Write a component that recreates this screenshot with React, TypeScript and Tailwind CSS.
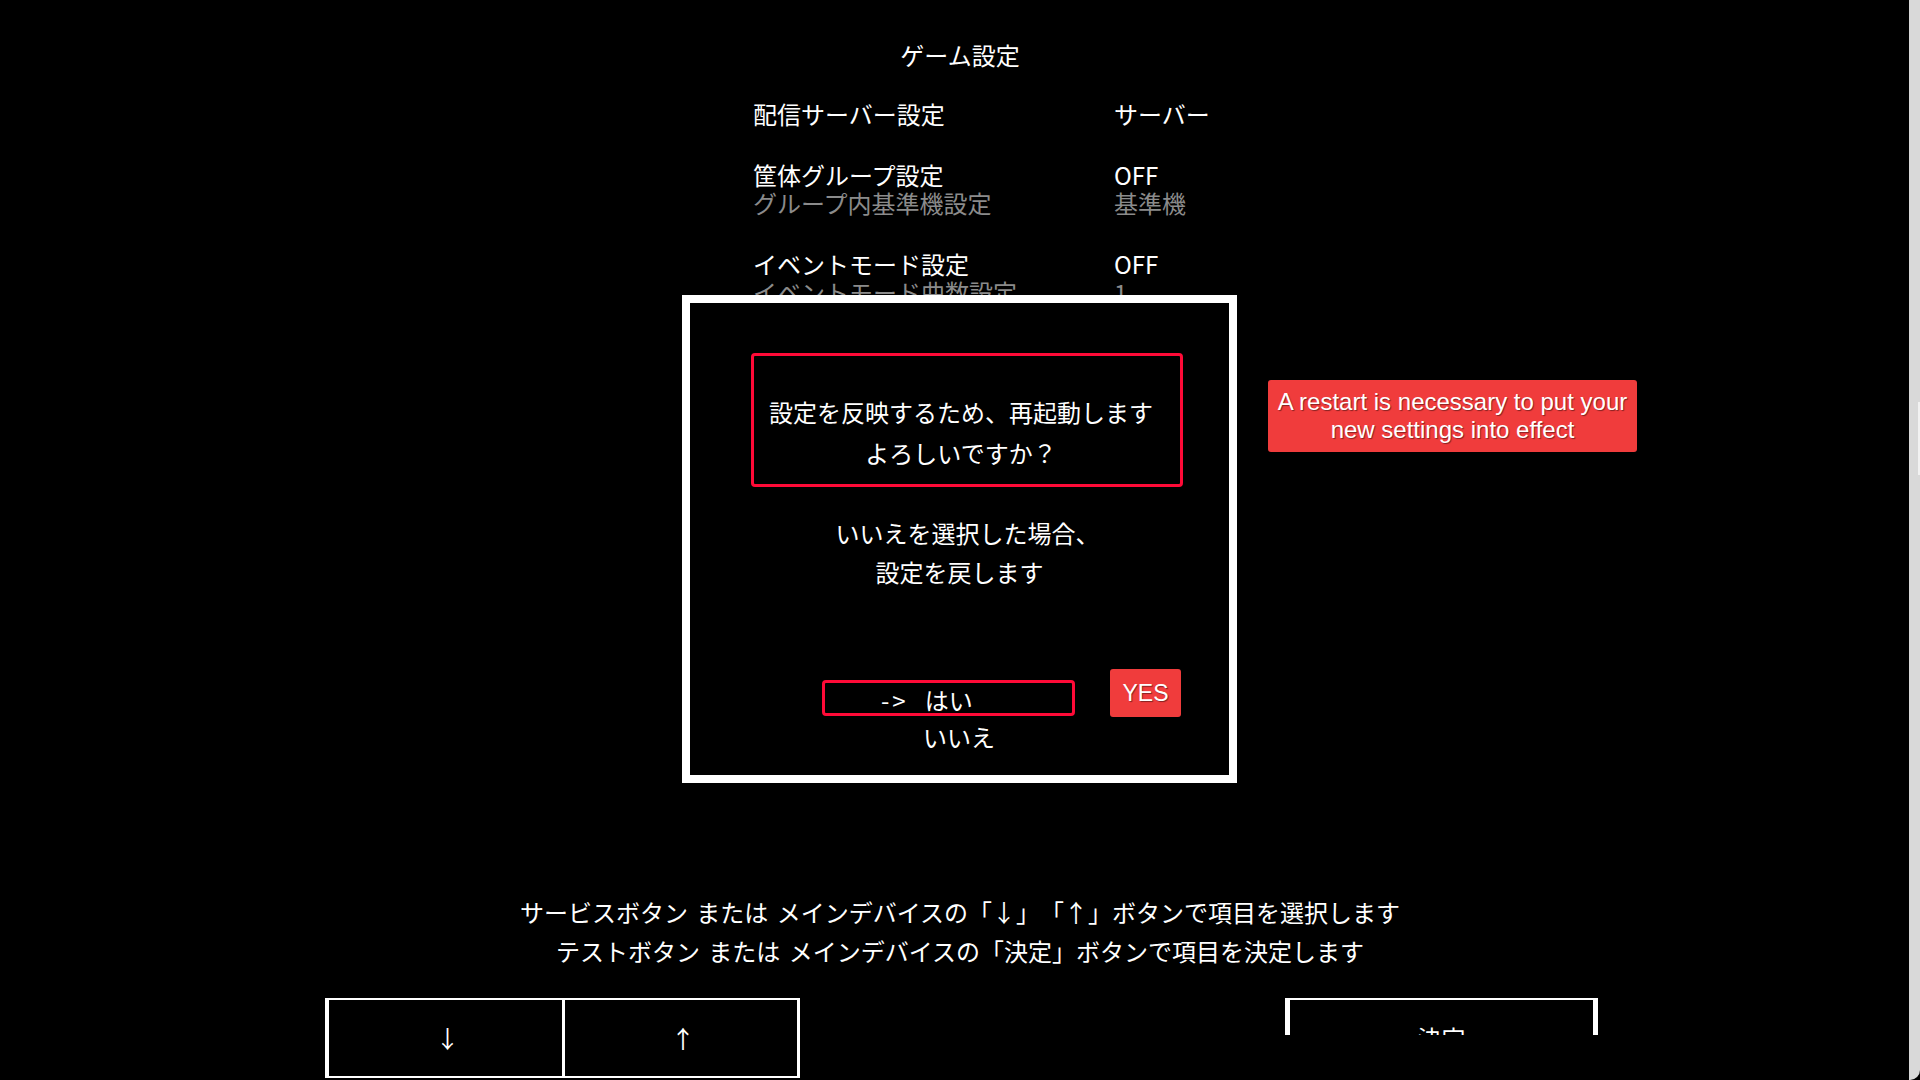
export default function App() {
  const shadow = "[text-shadow:1px_1px_1px_rgba(0,0,0,0.45)]";
  return (
    <div className="relative w-[1920px] h-[1080px] bg-black overflow-hidden text-white font-['Noto_Sans_CJK_JP','Noto_Sans',sans-serif]">
      <div className="flex flex-col h-full">
        <div className="pt-[39px] text-center text-[24px] leading-[32px]">ゲーム設定</div>
        <div className="mt-[29px] pl-[753px] flex flex-col gap-[33px] text-[24px] leading-[28px]">
          <div className="grid grid-cols-[361px_auto]">
            <div>配信サーバー設定</div>
            <div>サーバー</div>
          </div>
          <div className="grid grid-cols-[361px_auto]">
            <div>
              <div>筐体グループ設定</div>
              <div className="text-[#8b8b8b]">グループ内基準機設定</div>
            </div>
            <div>
              <div>OFF</div>
              <div className="text-[#8b8b8b]">基準機</div>
            </div>
          </div>
          <div className="grid grid-cols-[361px_auto]">
            <div>
              <div>イベントモード設定</div>
              <div className="text-[#8b8b8b]">イベントモード曲数設定</div>
            </div>
            <div>
              <div>OFF</div>
              <div className="text-[#8b8b8b]">1</div>
            </div>
          </div>
        </div>

        <div className="mt-auto flex flex-col">
          <div className="text-center text-[24px] leading-[39px] [word-spacing:3px]">
            <div>
              サービスボタン または メインデバイスの「↓」<span className="ml-[12px]">「↑」</span>ボタンで項目を選択します
            </div>
            <div>テストボタン または メインデバイスの「決定」ボタンで項目を決定します</div>
          </div>
          <div className="mt-[28px] h-[82px] flex items-start">
            <div className="ml-[325px] flex h-[80px]">
              <div className="w-[237px] h-full border-l-4 border-t-2 border-b-2 border-white flex items-center justify-center pl-[4px] text-[24px]">↓</div>
              <div className="w-[238px] h-full border-l-[3px] border-r-[3px] border-t-2 border-b-2 border-white flex items-center justify-center pl-[4px] text-[24px]">↑</div>
            </div>
            <div className="ml-[485px] h-[37px] overflow-hidden">
              <div className="w-[313px] h-[80px] border-x-[5px] border-t-2 border-b-2 border-white flex items-center justify-center text-[24px]">決定</div>
            </div>
          </div>
        </div>
      </div>

      {/* modal dialog */}
      <div className="absolute left-[682px] top-[295px] w-[555px] h-[488px] border-8 border-white bg-black flex flex-col">
        <div className="ml-[61px] mt-[50px] w-[432px] h-[134px] border-[3px] border-[#ff0a37] rounded-[4px] pt-[35px] pr-[12px] text-center text-[24px] leading-[41px]">
          <div>設定を反映するため、再起動します</div>
          <div>よろしいですか？</div>
        </div>
        <div className="mt-[26px] text-center text-[24px] leading-[39px]">
          <div className="pl-[16px]">いいえを選択した場合、</div>
          <div>設定を戻します</div>
        </div>
        <div className="mt-[78px] pl-[132px] flex items-start">
          <div className="flex flex-col">
            <div className="mt-[11px] w-[253px] h-[36px] border-[3px] border-[#ff0a37] rounded-[4px] flex items-center pt-[4px] text-[24px] leading-[30px]">
              <span className="ml-[56px] tracking-[3px]">-&gt;</span>
              <span className="ml-[16px]">はい</span>
            </div>
            <div className="pl-[101px] pt-[1px] text-[24px] leading-[40px]">いいえ</div>
          </div>
          <div className={`ml-[35px] w-[71px] h-[48px] bg-[#f03c3c] rounded-[3px] flex items-center justify-center text-[23px] font-['Liberation_Sans',Arial,sans-serif] ${shadow}`}>
            YES
          </div>
        </div>
      </div>

      {/* tooltip */}
      <div className={`absolute left-[1268px] top-[380px] w-[369px] h-[72px] bg-[#f03c3c] rounded-[3px] py-[8px] text-center text-[24px] leading-[28px] font-['Liberation_Sans',Arial,sans-serif] ${shadow}`}>
        A restart is necessary to put your
        <br />
        new settings into effect
      </div>

      {/* right frame strip */}
      <div className="absolute right-0 top-0 w-[11px] h-full bg-[#d9d9d9] rounded-br-[10px]">
        <div className="absolute right-0 top-[402px] w-[2px] h-[73px] bg-[#f2f2f2]" />
      </div>
    </div>
  );
}
